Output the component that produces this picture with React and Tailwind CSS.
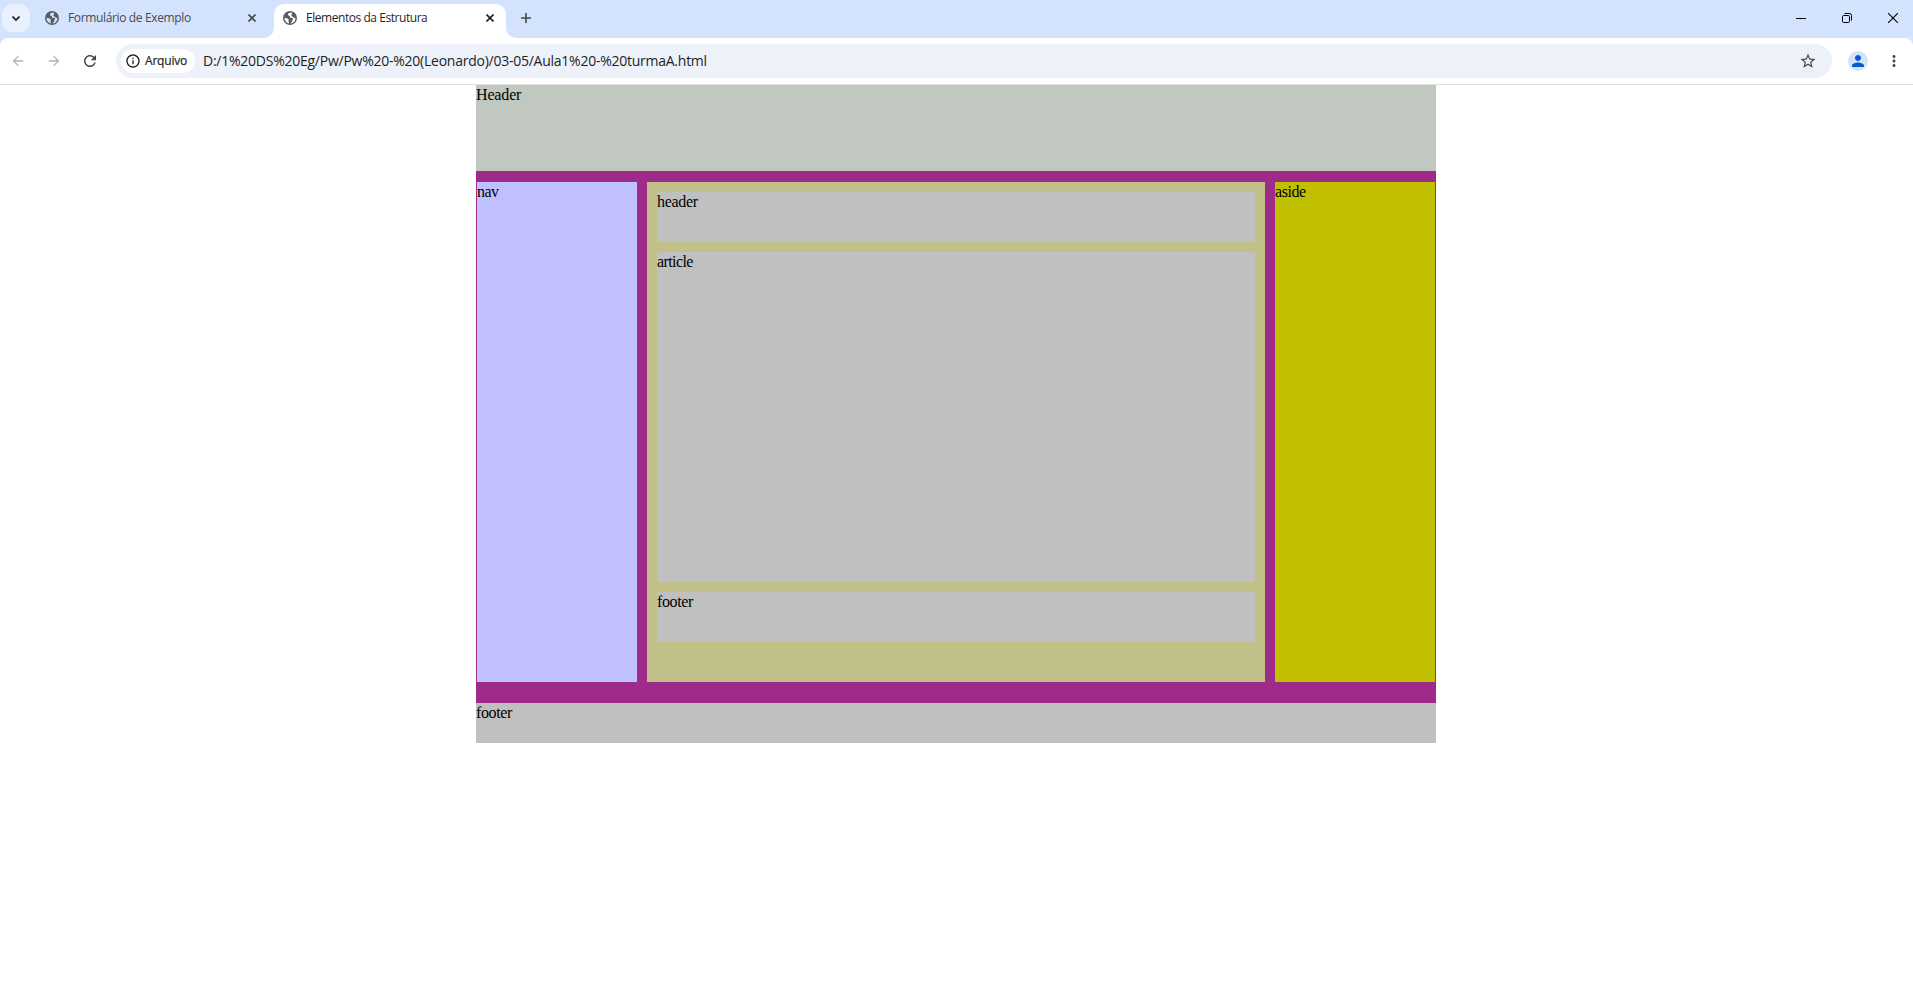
import { MdArrowBack, MdArrowForward, MdRefresh, MdInfoOutline, MdStarOutline, MdPerson, MdMoreVert } from "react-icons/md";

function Globe({ land }) {
  return (
    <svg viewBox="0 0 14 14" className="size-3.5 shrink-0">
      <circle cx="7" cy="7" r="7" fill="#5a5d61" />
      <path d="M8.8 1.6 C6.6 1.4 4.8 2.6 4.9 3.7 C5 4.7 6.2 4.4 6.8 5 C7.4 5.7 6.4 6.4 7.2 6.7 C8.2 7 9.2 6.4 9.8 7.2 C10.4 8.2 9.4 8.8 9.2 9.8 C9 10.8 8.6 11.8 7.4 12.5 C9.8 12.4 12.3 10.4 12.5 7.4 C11.8 6.6 10.8 7 10.4 6.2 C10 5.4 8.8 5.8 8.4 4.8 C8.2 3.8 9.4 3.4 8.8 1.6Z" fill={land} />
      <path d="M1.5 7 C2.6 7.2 4.6 7 5.4 8 C6 8.8 5.2 9.4 5.6 10.2 C6 11 5.6 11.8 6 12.4 C3.2 12 1.5 9.8 1.5 7Z" fill={land} />
    </svg>
  );
}

function Close({ className }) {
  return (
    <svg viewBox="0 0 8 8" className={`size-2 shrink-0 ${className}`} fill="none" stroke="currentColor" strokeWidth="1.6">
      <path d="M.5 .5 7.5 7.5M7.5 .5 .5 7.5" />
    </svg>
  );
}

function TabStrip() {
  return (
    <div className="flex h-[38px] bg-[#d3e3fd] pl-0.5 pt-1 text-xs text-[#1f1f1f]">
      <div className="flex size-7 items-center justify-center rounded-[10px] bg-[#e9f1fe]">
        <svg viewBox="0 0 8 5" className="h-[5px] w-2" fill="none" stroke="#1f1f1f" strokeWidth="1.7"><path d="M.5 .5 4 4 7.5 .5" /></svg>
      </div>
      <div className="flex h-7 w-[234px] items-center pl-[15px]">
        <Globe land="#d3e3fd" />
        <span className="ml-[9px] w-[180px] whitespace-nowrap tracking-[-0.36px] text-[#474a50]">Formulário de Exemplo</span>
        <Close className="text-[#474747]" />
      </div>
      <svg viewBox="0 0 10 10" className="size-2.5 shrink-0 self-end" fill="#fff"><path d="M10 0V10H0A10 10 0 0 0 10 0" /></svg>
      <div className="flex w-[232px] items-start rounded-t-[10px] bg-white">
        <div className="flex h-7 items-center pl-[9px]">
          <Globe land="#fff" />
          <span className="ml-[9px] w-[180px] whitespace-nowrap tracking-[-0.45px]">Elementos da Estrutura</span>
          <Close className="text-[#1f1f1f]" />
        </div>
      </div>
      <svg viewBox="0 0 10 10" className="size-2.5 shrink-0 self-end" fill="#fff"><path d="M0 0V10H10A10 10 0 0 1 0 0" /></svg>
      <svg viewBox="0 0 10 10" className="ml-[5px] mt-[9px] size-2.5 shrink-0" stroke="#474747" strokeWidth="1.6"><path d="M5 0V10M0 5H10" /></svg>
      <div className="ml-auto flex h-7 items-center pr-[15px] text-black">
        <svg viewBox="0 0 10 10" className="size-2.5" stroke="currentColor" strokeWidth="1"><path d="M0 5.5H10" /></svg>
        <svg viewBox="0 0 10 10" className="ml-9 size-2.5" fill="none" stroke="currentColor" strokeWidth="1"><rect x=".5" y="2.5" width="7" height="7" rx="1.2" /><path d="M2.5 .5H7.5Q9.5 .5 9.5 2.5V7.5" /></svg>
        <svg viewBox="0 0 10 10" className="ml-9 size-2.5" stroke="currentColor" strokeWidth="1.1"><path d="M0 0 10 10M10 0 0 10" /></svg>
      </div>
    </div>
  );
}

function Toolbar() {
  return (
    <div className="bg-[#d3e3fd]">
      <div className="flex h-[47px] items-center rounded-t-lg border-b border-[#dfe1e1] bg-white pl-2.5 text-[#474747]">
        <MdArrowBack className="size-4 shrink-0 text-[#b4b4b4]" />
        <MdArrowForward className="ml-5 size-4 shrink-0 text-[#b4b4b4]" />
        <MdRefresh className="ml-[19px] size-[18px] shrink-0" />
        <div className="ml-[17px] flex h-[34px] w-[1716px] items-center rounded-full bg-[#ecf1fa] pl-[5px] pr-[15px]">
          <div className="flex h-6 w-[74px] items-center rounded-full bg-white pl-1">
            <MdInfoOutline className="size-4 shrink-0 text-[#1f1f1f]" />
            <span className="ml-1 text-xs tracking-[-0.2px] text-[#1f1f1f] [-webkit-text-stroke:0.2px]">Arquivo</span>
          </div>
          <span className="ml-2 whitespace-nowrap text-sm tracking-[-0.25px] text-[#1f1f1f]">D:/1%20DS%20Eg/Pw/Pw%20-%20(Leonardo)/03-05/Aula1%20-%20turmaA.html</span>
          <MdStarOutline className="ml-auto size-[18px] shrink-0" />
        </div>
        <div className="ml-4 flex size-5 items-center justify-center rounded-full bg-[#d3e3fd] text-[#0b57d0]">
          <MdPerson className="size-[18px]" />
        </div>
        <MdMoreVert className="ml-[17px] size-[18px]" />
      </div>
    </div>
  );
}

function Page() {
  return (
    <main className="ml-[476px] w-[960px] bg-[#9e2b8a] font-['Liberation_Serif',serif] text-base leading-[20px] text-black">
      <header className="h-[86px] bg-[#c1c8c0] tracking-[-0.15px]">Header</header>
      <div className="flex h-[532px] gap-2.5 px-px pb-[21px] pt-[11px]">
        <nav className="w-40 bg-[#c0c0ff] tracking-[-0.6px]">nav</nav>
        <section className="flex flex-1 flex-col gap-2.5 bg-[#c0c088] p-2.5">
          <header className="h-[50px] bg-[#c0c0c0] tracking-[-0.3px]">header</header>
          <article className="h-[330px] bg-[#c0c0c0] tracking-[-0.6px]">article</article>
          <footer className="h-[50px] bg-[#c0c0c0] tracking-[-0.4px]">footer</footer>
        </section>
        <aside className="w-40 bg-[#c0c000] tracking-[-0.45px]">aside</aside>
      </div>
      <footer className="h-10 bg-[#c0c0c0] tracking-[-0.4px]">footer</footer>
    </main>
  );
}

export default function App() {
  return (
    <div className="h-[991px] w-[1913px] overflow-hidden bg-white font-['Open_Sans',sans-serif]">
      <TabStrip />
      <Toolbar />
      <Page />
    </div>
  );
}
